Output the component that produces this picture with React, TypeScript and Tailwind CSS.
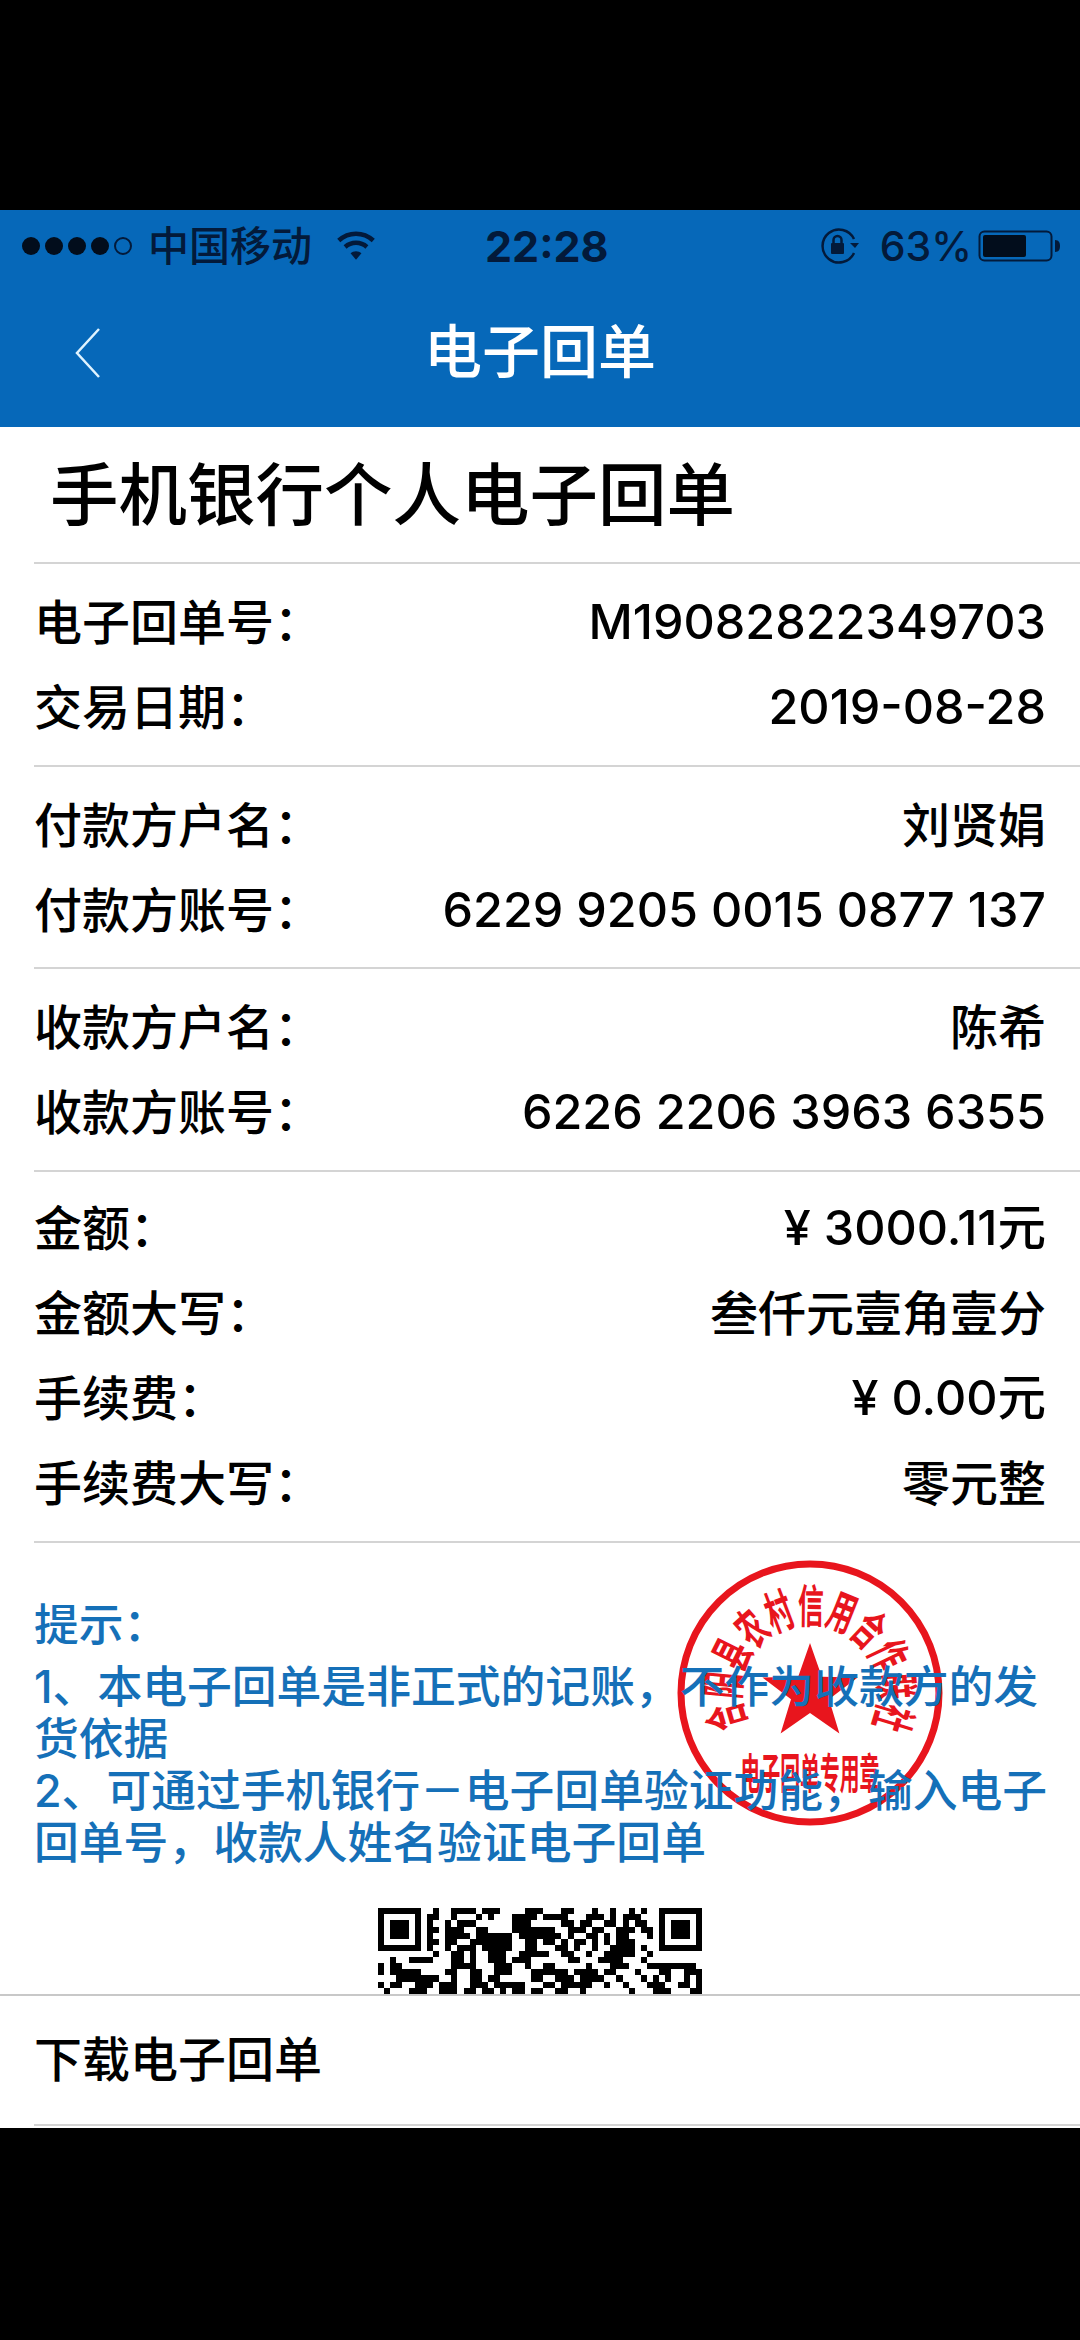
const QR_LEFT = [
  '111111100100111101110000111',
  '100000101100100010100011110',
  '101110101001011100000011100',
  '101110101101110011000011111',
  '101110101001111011111101111',
  '100000101101100111111100110',
  '111111101001011101111100110',
  '000000000100110100111001111',
  '001001111000110100111011100',
  '101100000000111100011100100',
  '101111100001100110011100011',
  '000111111100100110110000011',
  '101100111011100111011111000',
  '010001110011101101101011011',
];

const QR_RIGHT = [
  '0001100010010010100' + '1111111',
  '1111000111010111000' + '1000001',
  '0001101100110101100' + '1011101',
  '1100111011001110110' + '1011101',
  '1110100110101100010' + '1011101',
  '1101011010101110000' + '1000001',
  '0011010010011110100' + '1111111',
  '1001100100111110010' + '0000000',
  '0000110001111000100' + '0000000',
  '1100000100011100011' + '1111110',
  '1111011110110001000' + '1100111',
  '0011101111001000101' + '0100101',
  '1101111100100100011' + '1001101',
  '0011001000000010001' + '1100011',
];

const SEAL_CHARS = ['合', '阳', '县', '农', '村', '信', '用', '合', '作', '联', '社'];

const SECTIONS = [
  [
    ['电子回单号：', 'M19082822349703'],
    ['交易日期：', '2019-08-28'],
  ],
  [
    ['付款方户名：', '刘贤娟'],
    ['付款方账号：', '6229 9205 0015 0877 137'],
  ],
  [
    ['收款方户名：', '陈希'],
    ['收款方账号：', '6226 2206 3963 6355'],
  ],
  [
    ['金额：', '¥ 3000.11元'],
    ['金额大写：', '叁仟元壹角壹分'],
    ['手续费：', '¥ 0.00元'],
    ['手续费大写：', '零元整'],
  ],
];

const SECTION_PADDING = ['pt-[16px] pb-[15px]', 'pt-[16px] pb-[14px]', 'pt-[16px] pb-[15px]', 'pt-[14px] pb-[15px]'];

const StatusBar = () => (
  <div className="relative flex h-[72px] items-center font-medium text-[#031a3a]">
    <div className="ml-[22px] flex gap-[5px]">
      <span className="h-[18px] w-[18px] rounded-full bg-[#020d1c]" />
      <span className="h-[18px] w-[18px] rounded-full bg-[#020d1c]" />
      <span className="h-[18px] w-[18px] rounded-full bg-[#020d1c]" />
      <span className="h-[18px] w-[18px] rounded-full bg-[#020d1c]" />
      <span className="h-[18px] w-[18px] rounded-full border-2 border-[#031a3a]" />
    </div>
    <span className="ml-[16px] text-[41px] leading-none">中国移动</span>
    <svg width="40" height="34" viewBox="0 0 44 34" className="ml-[24px]" fill="none" stroke="#031a3a" strokeWidth="5">
      <path d="M3 11c11-10 27-10 38 0" />
      <path d="M10 18c7-6 17-6 24 0" />
      <path d="M22 32l-6-7c3-3 9-3 12 0z" fill="#031a3a" stroke="none" />
    </svg>
    <span className="absolute left-[485px] text-[43px] leading-none font-bold">22:28</span>
    <div className="ml-auto mr-[18px] flex items-center">
      <svg width="40" height="36" viewBox="0 0 40 36" fill="none" stroke="#031a3a" strokeWidth="2.5">
        <path d="M34 11A16.5 16.5 0 1 0 34 25" />
        <path d="M30 15l5 5 4-5" fill="#031a3a" stroke="none" />
        <rect x="11" y="15" width="13" height="11" rx="1" fill="#031a3a" stroke="none" />
        <path d="M13.5 15v-3a4 4 0 0 1 8 0v3" />
      </svg>
      <span className="ml-[20px] text-[41px] leading-none">63%</span>
      <svg width="84" height="32" viewBox="0 0 84 32" className="ml-[6px]" fill="none">
        <rect x="1.5" y="1.5" width="72" height="29" rx="5" stroke="#031a3a" strokeWidth="2" />
        <rect x="5" y="5" width="43" height="22" rx="2" fill="#020d1c" />
        <path d="M77 10c4 0 5 3 5 6s-1 6-5 6z" fill="#031a3a" />
      </svg>
    </div>
  </div>
);

const Seal = () => (
  <svg width="280" height="280" viewBox="-140 -140 280 280" className="absolute left-[636px] top-[10px]">
    <circle r="129" fill="none" stroke="#e8151d" strokeWidth="7" />
    <path
      d="M0 -50L11.8 -16.2L47.6 -15.5L19 6.2L29.4 40.5L0 20L-29.4 40.5L-19 6.2L-47.6 -15.5L-11.8 -16.2Z"
      fill="#e8151d"
    />
    {SEAL_CHARS.map((ch, i) => (
      <text
        key={i}
        transform={`rotate(${-106 + i * 21.3}) translate(0 -70) scale(0.72 1.28)`}
        textAnchor="middle"
        fontSize="36"
        fontWeight="600"
        fill="#e8151d"
        fontFamily="'Noto Sans CJK SC', sans-serif"
      >
        {ch}
      </text>
    ))}
    <text
      transform="translate(0 96) scale(0.62 1.3)"
      textAnchor="middle"
      fontSize="32"
      fontWeight="600"
      fill="#e8151d"
      fontFamily="'Noto Sans CJK SC', sans-serif"
    >
      电子回单专用章
    </text>
  </svg>
);

const QrCode = () => (
  <svg width="324" height="86" viewBox="0 0 53 14" shapeRendering="crispEdges" className="block">
    {QR_LEFT.map((row, y) =>
      row.split('').map((v, x) => (v === '1' ? <rect key={`l${x}-${y}`} x={x} y={y} width="1" height="1" /> : null)),
    )}
    {QR_RIGHT.map((row, y) =>
      row.split('').map((v, x) => (v === '1' ? <rect key={`r${x}-${y}`} x={x + 27} y={y} width="1" height="1" /> : null)),
    )}
  </svg>
);

export default function App() {
  return (
    <div className="flex h-[2340px] w-[1080px] flex-col overflow-hidden bg-black font-['Inter','Noto_Sans_CJK_SC',sans-serif] text-black">
      <div className="h-[210px] shrink-0" />

      <header className="h-[217px] shrink-0 bg-[#0668b9]">
        <StatusBar />
        <div className="relative flex h-[145px] items-center justify-center pb-[5px]">
          <svg width="28" height="52" viewBox="0 0 28 52" className="absolute left-[74px] top-[45px]" fill="none" stroke="#dff3ff" strokeWidth="2.5">
            <path d="M25 2L3 26l22 24" />
          </svg>
          <span className="text-[58px] leading-none font-medium text-white">电子回单</span>
        </div>
      </header>

      <main className="flex h-[1567px] shrink-0 flex-col bg-white pl-[34px]">
        <h1 className="flex h-[135px] items-center pt-[4px] pl-[16px] text-[68.5px] leading-none font-medium">手机银行个人电子回单</h1>

        {SECTIONS.map((rows, i) => (
          <section key={i} className={`border-t-2 border-[#d4d4d4] pr-[34px] ${SECTION_PADDING[i]}`}>
            {rows.map(([label, value]) => (
              <div key={label} className="flex h-[85px] items-center justify-between text-[48px] leading-none font-medium">
                <span>{label}</span>
                <span className={/\d/.test(value) ? 'text-[48.5px]' : ''}>{value}</span>
              </div>
            ))}
          </section>
        ))}

        <section className="relative flex-1 overflow-hidden border-t-2 border-[#d4d4d4]">
          <Seal />
          <div className="relative pt-[56px] text-[44.8px] leading-[52px] font-medium text-[#1570b8]">
            <p className="mb-[10px]">提示：</p>
            <p>
              1、本电子回单是非正式的记账，不作为收款方的发
              <br />
              货依据
            </p>
            <p>
              2、可通过手机银行－电子回单验证功能，输入电子
              <br />
              回单号，收款人姓名验证电子回单
            </p>
          </div>
          <div className="absolute left-[344px] top-[365px] text-black">
            <QrCode />
          </div>
        </section>
      </main>

      <footer className="h-[134px] shrink-0 border-t-2 border-[#c8c8c8] bg-white pb-[2px] pl-[34px]">
        <div className="flex h-full items-center border-b-2 border-[#d4d4d4] text-[48px] leading-none font-medium">下载电子回单</div>
      </footer>
    </div>
  );
}
